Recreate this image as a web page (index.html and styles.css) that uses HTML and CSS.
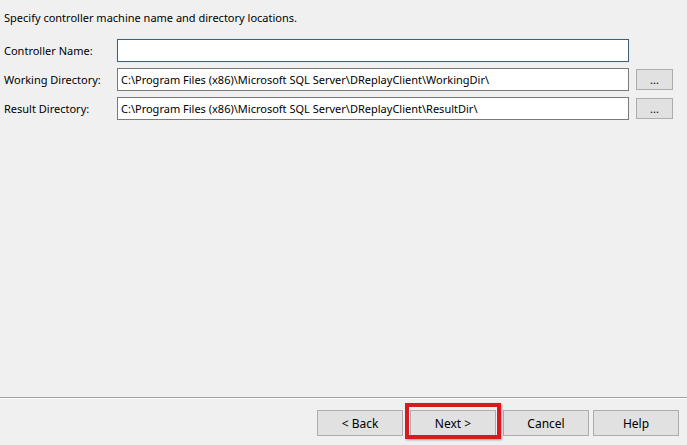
FILE: index.html
```html
<!DOCTYPE html>
<html>
<head>
<meta charset="utf-8">
<link rel="stylesheet" href="styles.css">
</head>
<body>
<div class="page">
  <div class="content">
    <p class="intro">Specify controller machine name and directory locations.</p>
    <div class="row">
      <label class="label">Controller Name:</label>
      <div class="field focused"></div>
    </div>
    <div class="row">
      <label class="label">Working Directory:</label>
      <div class="field">C:\Program Files (x86)\Microsoft SQL Server\DReplayClient\WorkingDir\</div>
      <button class="browse">...</button>
    </div>
    <div class="row">
      <label class="label">Result Directory:</label>
      <div class="field">C:\Program Files (x86)\Microsoft SQL Server\DReplayClient\ResultDir\</div>
      <button class="browse">...</button>
    </div>
  </div>
  <div class="separator"></div>
  <div class="footer">
    <button class="btn">&lt; Back</button>
    <div class="highlight-wrap">
      <button class="btn">Next &gt;</button>
      <div class="highlight"></div>
    </div>
    <button class="btn">Cancel</button>
    <button class="btn help">Help</button>
  </div>
</div>
</body>
</html>
```
FILE: styles.css
```css
html, body {
  margin: 0;
  padding: 0;
  background: #f0f0f0;
}
body {
  font-family: "Noto Sans", "Liberation Sans", sans-serif;
  font-size: 11px;
  color: #000;
}
.page {
  width: 687px;
  height: 445px;
  display: flex;
  flex-direction: column;
}
.content {
  flex: 1;
  padding: 0 0 0 4px;
}
.intro {
  margin: 0;
  padding-top: 10px;
  height: 39px;
  box-sizing: border-box;
  line-height: 16px;
}
.row {
  display: flex;
  align-items: center;
  height: 23px;
  margin-bottom: 6px;
}
.label {
  width: 113px;
  flex: none;
}
.field {
  width: 512px;
  height: 23px;
  box-sizing: border-box;
  background: #fff;
  border: 1px solid #7a7a7a;
  padding: 0 3px;
  line-height: 21px;
  white-space: nowrap;
  overflow: hidden;
}
.field.focused {
  border-color: #3d6470;
  box-shadow: 0 0 0 1px #e3edf2;
}
.browse {
  margin-left: 7px;
  width: 37px;
  height: 21px;
  box-sizing: border-box;
  background: #e1e1e1;
  border: 1px solid #adadad;
  font: inherit;
  font-size: 11px;
  padding: 0;
  color: #000;
  line-height: 17px;
}
.separator {
  height: 1px;
  border-top: 1px solid #a0a0a0;
  background: #fdfdfd;
  flex: none;
}
.footer {
  height: 46px;
  flex: none;
  display: flex;
  justify-content: flex-end;
  align-items: flex-start;
  padding: 11px 8px 0 0;
  box-sizing: border-box;
}
.btn {
  width: 86px;
  height: 26px;
  box-sizing: border-box;
  background: #e1e1e1;
  border: 1px solid #adadad;
  font: inherit;
  font-size: 12px;
  color: #000;
  padding: 0;
  margin-left: 7px;
}
.btn.help {
  margin-left: 4px;
}
.highlight-wrap {
  position: relative;
  margin-left: 7px;
}
.highlight-wrap .btn {
  margin-left: 0;
  display: block;
}
.highlight {
  position: absolute;
  left: -5px;
  top: -7px;
  width: 96px;
  height: 36px;
  box-sizing: border-box;
  border: 4px solid #d61a1f;
  box-shadow: 1px 1px 2px rgba(0,0,0,0.35);
}
```
